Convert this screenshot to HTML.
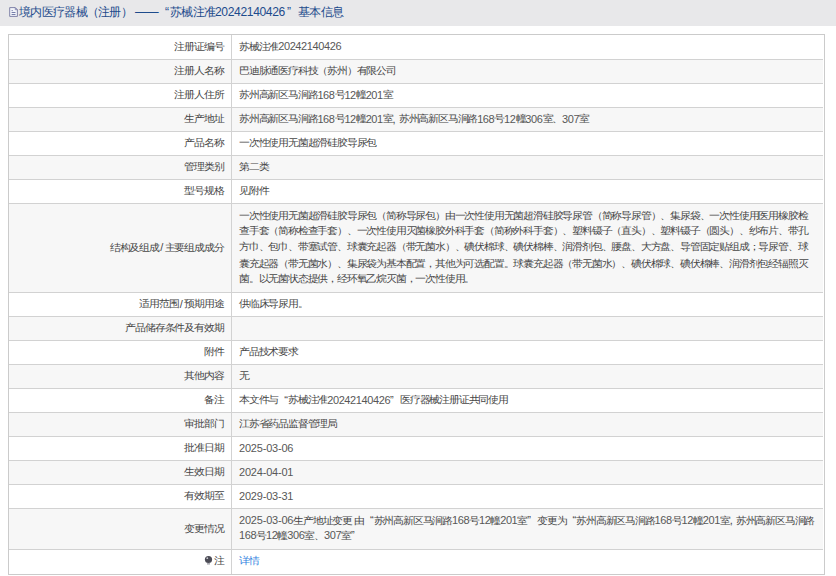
<!DOCTYPE html>
<html><head><meta charset="utf-8">
<style>
*{margin:0;padding:0;box-sizing:border-box}
html,body{width:836px;height:576px;background:#fff;overflow:hidden}
body{font-family:"Liberation Sans",sans-serif;position:relative;color:#464646;font-weight:500}
.hd{position:absolute;left:0;top:0;width:836px;height:26px;background:#e8e8ea}
.ttl{position:absolute;left:19px;top:5px;font-size:12.1px;letter-spacing:-0.7px;line-height:14px;color:#1d4b8c;font-weight:500;white-space:nowrap}
.ico{position:absolute;left:9px;top:7px}
.tb{position:absolute;left:8px;top:34px;width:817px;border:1px solid #cbcbcb}
.tb:before{content:"";position:absolute;left:222px;top:0;bottom:0;width:1px;background:#d2d2d2;z-index:2}
.r{position:relative;margin-right:1px;border-top:1px solid #d2d2d2;display:flex}
.r:first-child{border-top:0}
.r.g{background:#f7f7f7}
.l{width:223px;flex:none;padding-left:0;letter-spacing:-1.2px;transform:translateY(-0.7px) scaleY(0.92);text-align:right;padding-right:8.6px;font-size:11px;white-space:nowrap;display:flex;align-items:center;justify-content:flex-end}
.v{flex:1;white-space:nowrap;transform:translateY(-0.7px) scaleY(0.92);letter-spacing:-1.2px;padding-left:7px;padding-right:7px;font-size:11px;display:flex;align-items:center}
.v div{line-height:17.12px;white-space:nowrap}
.n{font-size:11px;letter-spacing:-0.4px;color:#575757}
.d{letter-spacing:-0.2px}
.q{display:inline-block;width:9.8px;letter-spacing:0}
.ql{text-align:right}
.qr{text-align:left}
.cm{letter-spacing:0}
.sl{letter-spacing:0;margin:0 1.4px}
.lk{color:#2f82e0;font-weight:500}
</style></head><body>
<div class="hd">
<svg style="position:absolute;left:0;top:0" width="24" height="24" viewBox="0 0 24 24"><path d="M9.7 7.6H15.2L17.4 9.8V16.4H9.7Z" fill="#f2f4fa" stroke="#74769f" stroke-width="0.9"/><path d="M15.2 7.6V9.8H17.4Z" fill="#a6a8d0" stroke="#74769f" stroke-width=".5"/><path d="M11.6 10.6h1.2M11.6 12.5h3.9M11.6 14.5h3.9" stroke="#6a72a0" stroke-width="0.9"/></svg>
<div class="ttl" style="left:19px">境内医疗器械（注册）</div><div class="ttl" style="left:135px">——</div><div class="ttl" style="left:165px">“</div><div class="ttl" style="left:170px">苏械注准</div><div class="ttl" style="left:215px;letter-spacing:-0.37px">20242140426</div><div class="ttl" style="left:287px">”</div><div class="ttl" style="left:298px">基本信息</div>
</div>
<div class="tb">
<div class="r" style="height:24px"><div class="l">注册证编号</div><div class="v">苏械注准<span class="n">20242140426</span></div></div>
<div class="r g" style="height:24px"><div class="l">注册人名称</div><div class="v">巴迪脉通医疗科技（苏州）有限公司</div></div>
<div class="r" style="height:24px"><div class="l">注册人住所</div><div class="v">苏州高新区马涧路<span class="n">168</span>号<span class="n">12</span>幢<span class="n">201</span>室</div></div>
<div class="r g" style="height:24px"><div class="l">生产地址</div><div class="v">苏州高新区马涧路<span class="n">168</span>号<span class="n">12</span>幢<span class="n">201</span>室<span class="cm">,&nbsp;</span>苏州高新区马涧路<span class="n">168</span>号<span class="n">12</span>幢<span class="n">306</span>室、<span class="n">307</span>室</div></div>
<div class="r" style="height:24px"><div class="l">产品名称</div><div class="v">一次性使用无菌超滑硅胶导尿包</div></div>
<div class="r g" style="height:24px"><div class="l">管理类别</div><div class="v">第二类</div></div>
<div class="r" style="height:24px"><div class="l">型号规格</div><div class="v">见附件</div></div>
<div class="r g" style="height:89px"><div class="l">结构及组成<span class="sl">/</span>主要组成成分</div><div class="v"><div>一次性使用无菌超滑硅胶导尿包（简称导尿包）由一次性使用无菌超滑硅胶导尿管（简称导尿管）、集尿袋、一次性使用医用橡胶检<br>查手套（简称检查手套）、一次性使用灭菌橡胶外科手套（简称外科手套）、塑料镊子（直头）、塑料镊子（圆头）、纱布片、带孔<br>方巾、包巾、带塞试管、球囊充起器（带无菌水）、碘伏棉球、碘伏棉棒、润滑剂包、腰盘、大方盘、导管固定贴组成；导尿管、球<br>囊充起器（带无菌水）、集尿袋为基本配置，其他为可选配置。球囊充起器（带无菌水）、碘伏棉球、碘伏棉棒、润滑剂包经辐照灭<br>菌。以无菌状态提供，经环氧乙烷灭菌，一次性使用。</div></div></div>
<div class="r" style="height:24px"><div class="l">适用范围<span class="sl">/</span>预期用途</div><div class="v">供临床导尿用。</div></div>
<div class="r g" style="height:24px"><div class="l">产品储存条件及有效期</div><div class="v"></div></div>
<div class="r" style="height:24px"><div class="l">附件</div><div class="v">产品技术要求</div></div>
<div class="r g" style="height:24px"><div class="l">其他内容</div><div class="v">无</div></div>
<div class="r" style="height:24px"><div class="l">备注</div><div class="v">本文件与<span class="q ql">“</span>苏械注准<span class="n">20242140426</span><span class="q qr">”</span>医疗器械注册证共同使用</div></div>
<div class="r g" style="height:24px"><div class="l">审批部门</div><div class="v">江苏省药品监督管理局</div></div>
<div class="r" style="height:24px"><div class="l">批准日期</div><div class="v"><span class="n d">2025-03-06</span></div></div>
<div class="r g" style="height:24px"><div class="l">生效日期</div><div class="v"><span class="n d">2024-04-01</span></div></div>
<div class="r" style="height:24px"><div class="l">有效期至</div><div class="v"><span class="n d">2029-03-31</span></div></div>
<div class="r g" style="height:41px"><div class="l">变更情况</div><div class="v"><div><span class="n d">2025-03-06</span>生产地址变更 由<span class="q ql">“</span>苏州高新区马涧路<span class="n">168</span>号<span class="n">12</span>幢<span class="n">201</span>室<span class="q qr">”</span>变更为<span class="q ql">“</span>苏州高新区马涧路<span class="n">168</span>号<span class="n">12</span>幢<span class="n">201</span>室<span class="cm">,&nbsp;</span>苏州高新区马涧路<br><span class="n">168</span>号<span class="n">12</span>幢<span class="n">306</span>室、<span class="n">307</span>室<span class="q qr">”</span></div></div></div>
<div class="r" style="height:25px"><div class="l" style="transform:translateY(-1.2px) scaleY(0.92)">注</div><svg style="position:absolute;left:191px;top:1.8px" width="16" height="16" viewBox="0 0 16 16"><path d="M7 11.2h3v1.3H7z" fill="#9a9aa2"/><circle cx="8.5" cy="7.5" r="3.6" fill="#4b4b55"/><circle cx="7.3" cy="6.2" r="0.9" fill="#c9c9d0"/></svg><div class="v lk" style="transform:translateY(-1.2px) scaleY(0.92)">详情</div></div>
</div>
</body></html>
